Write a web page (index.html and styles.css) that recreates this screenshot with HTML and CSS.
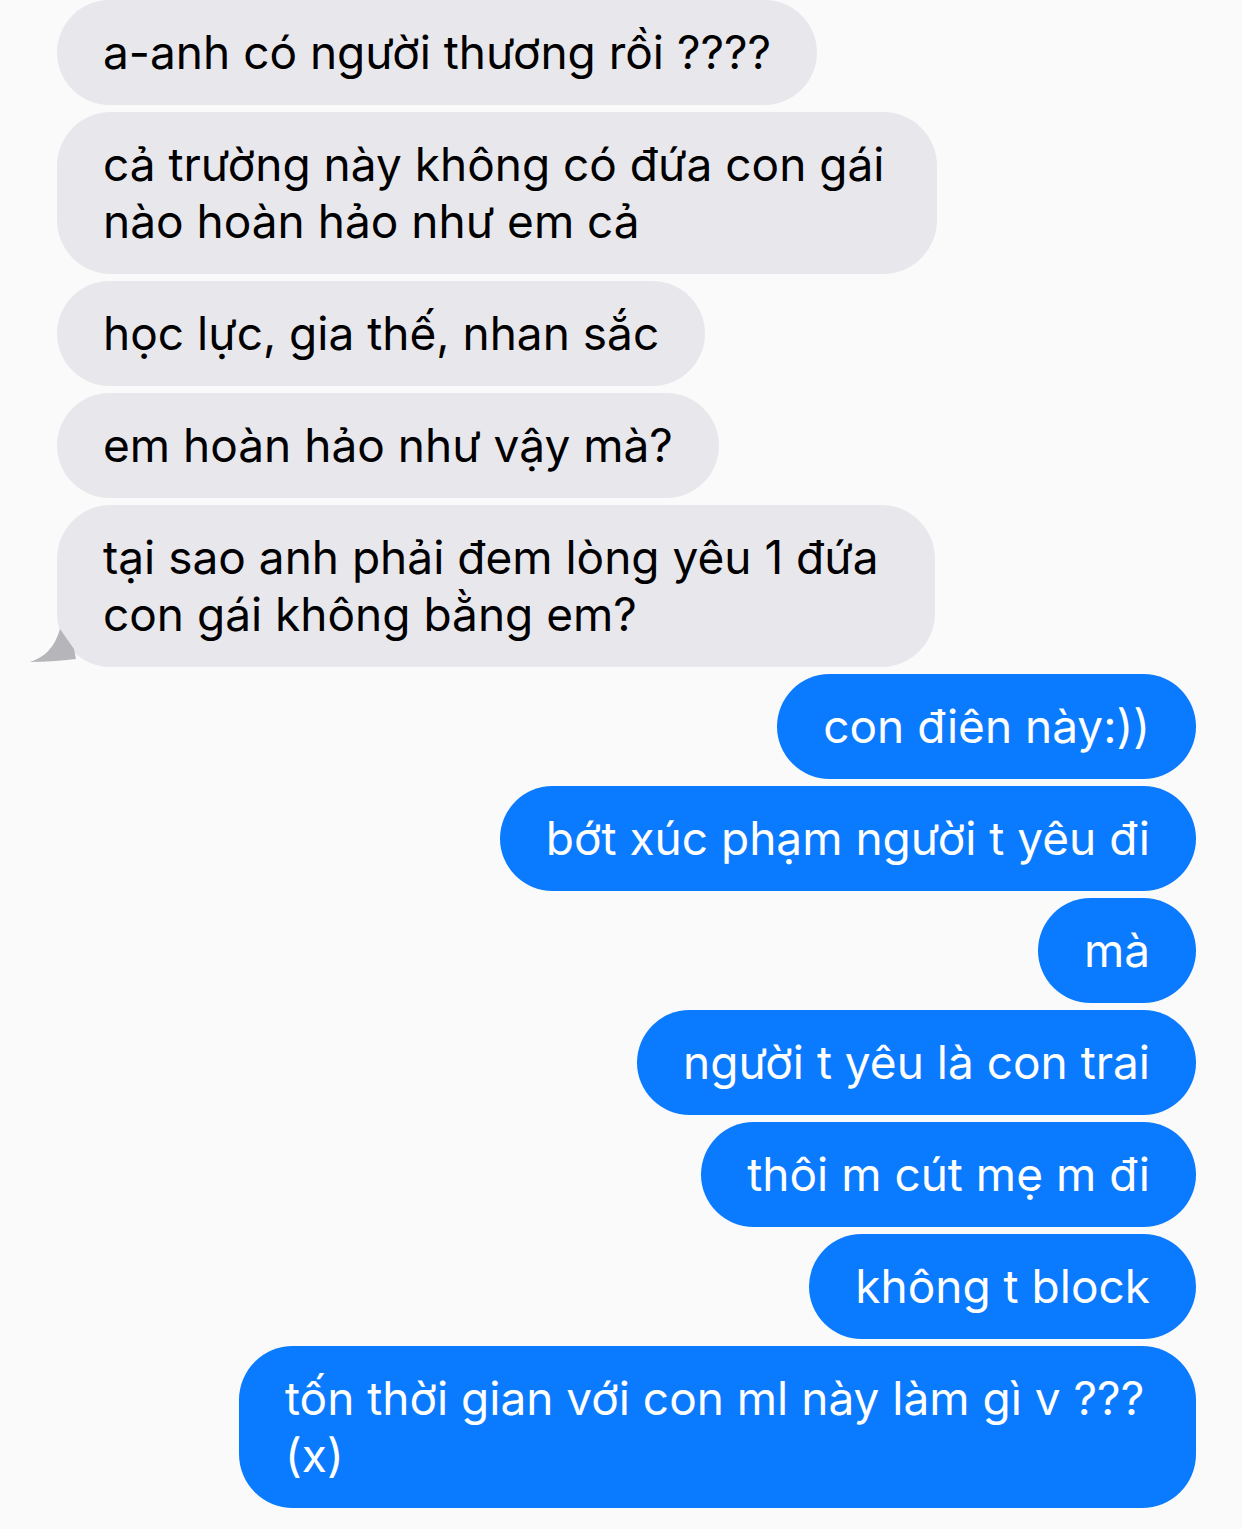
FILE: index.html
```html
<!DOCTYPE html>
<html lang="vi">
<head>
<meta charset="utf-8">
<link rel="stylesheet" href="styles.css">
</head>
<body>
<div class="chat">
  <div class="msg in">a-anh có người thương rồi ????</div>
  <div class="msg in w2">cả trường này không có đứa con gái nào hoàn hảo như em cả</div>
  <div class="msg in">học lực, gia thế, nhan sắc</div>
  <div class="msg in">em hoàn hảo như vậy mà?</div>
  <div class="msg in w5 last">tại sao anh phải đem lòng yêu 1 đứa con gái không bằng em?<svg class="tail" width="46" height="36" viewBox="0 0 46 36"><path d="M0 35 C14 30 24 22 30 2 L44 22 L46 32 C30 34 14 35 0 35 Z" fill="#b6b5ba"/></svg></div>
  <div class="msg out">con điên này:))</div>
  <div class="msg out">bớt xúc phạm người t yêu đi</div>
  <div class="msg out">mà</div>
  <div class="msg out">người t yêu là con trai</div>
  <div class="msg out">thôi m cút mẹ m đi</div>
  <div class="msg out">không t block</div>
  <div class="msg out w7">tốn thời gian với con ml này làm gì v ???<br>(x)</div>
</div>
</body>
</html>
```
FILE: styles.css
```css
html, body {
  margin: 0;
  padding: 0;
  background: #fafafa;
}
.chat {
  display: flex;
  flex-direction: column;
  gap: 7px;
  padding: 0 46px 20px 57px;
  font-family: Inter, "Noto Sans", sans-serif;
  font-size: 46px;
  line-height: 57px;
  letter-spacing: 0;
}
.msg {
  position: relative;
  padding: 24px 46px;
  border-radius: 54px;
  max-width: 880px;
  box-sizing: border-box;
}
.in {
  align-self: flex-start;
  background: #e8e7ec;
  color: #000;
}
.out {
  align-self: flex-end;
  background: #0a7aff;
  color: #fff;
}
.w2 { width: 880px; }
.w5 { width: 878px; }
.w7 { width: 957px; max-width: none; }
.tail {
  position: absolute;
  left: -27px;
  bottom: 4px;
  z-index: -1;
}
.last { z-index: 1; }
```
